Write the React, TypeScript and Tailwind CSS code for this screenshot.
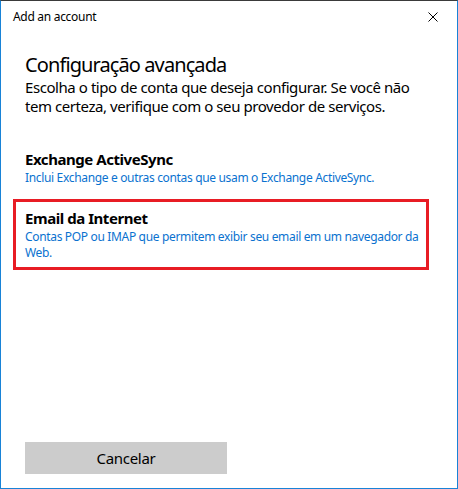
import React from "react";

// Account type options shown in the dialog
interface AccountOption {
  id: string;
  title: string;
  lines: string[];
  selected?: boolean;
}

const options: AccountOption[] = [
  {
    id: "eas",
    title: "Exchange ActiveSync",
    lines: ["Inclui Exchange e outras contas que usam o Exchange ActiveSync."],
  },
  {
    id: "imap",
    title: "Email da Internet",
    lines: [
      "Contas POP ou IMAP que permitem exibir seu email em um navegador da",
      "Web.",
    ],
    selected: true,
  },
];

const font = { fontFamily: '"Noto Sans", "Open Sans", "Liberation Sans", sans-serif' };

export default function App() {
  return (
    <div
      className="w-[458px] h-[489px] bg-white flex flex-col border-x border-b border-[#1883d7] border-t border-t-[#3a3a3a] text-black"
      style={font}
    >
      {/* title bar */}
      <div className="h-[31px] flex items-center justify-between pl-[12px] pr-[18px]">
        <span className="text-[12px] leading-[16px] tracking-[-0.025em]">Add an account</span>
        <svg width="10" height="10" viewBox="0 0 10 10" className="mr-[1px]">
          <path d="M0.5 0.5 L9.5 9.5 M9.5 0.5 L0.5 9.5" stroke="#000" strokeWidth="1" />
        </svg>
      </div>

      <div className="px-[24px] mt-[20px] whitespace-nowrap">
        <h1 className="text-[20px] leading-[26px] font-normal tracking-[-0.045em]">
          Configuração avançada
        </h1>
        <p className="text-[15px] leading-[19px] tracking-[-0.029em]">
          Escolha o tipo de conta que deseja configurar. Se você não
          <br />
          tem certeza, verifique com o seu provedor de serviços.
        </p>
      </div>

      <div className="flex flex-col gap-[4px] mt-[24px] pl-[12px] pr-[28px] whitespace-nowrap">
        {options.map((o) => (
          <div
            key={o.id}
            className={`border-[3px] pt-[6px] pb-[6px] pl-[9px] pr-[6px] ${
              o.selected ? "border-[#e81c24]" : "border-transparent"
            }`}
          >
            <div className="text-[15px] leading-[20px] font-bold tracking-[-0.03em]">{o.title}</div>
            <div className="text-[12px] leading-[16px] text-[#0a72cf] mt-[1px] tracking-[-0.028em]">
              {o.lines.map((l, i) => (
                <div key={i}>{l}</div>
              ))}
            </div>
          </div>
        ))}
      </div>

      <div className="mt-auto mb-[14px] ml-[24px]">
        <button className="w-[202px] h-[32px] bg-[#cccccc] text-[15px] leading-[20px] tracking-[-0.02em]">
          Cancelar
        </button>
      </div>
    </div>
  );
}
